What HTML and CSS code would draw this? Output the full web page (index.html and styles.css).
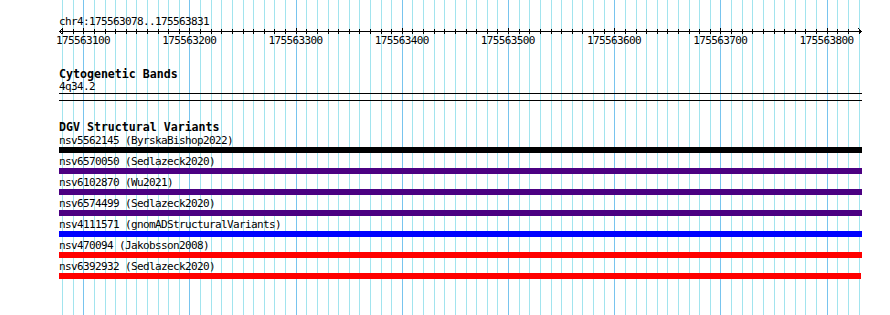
FILE: index.html
```html
<!DOCTYPE html>
<html lang="en">
  <head>
    <meta charset="UTF-8" />
    <title>chr4:175563078..175563831</title>
    <link rel="stylesheet" href="styles.css">
  </head>
  <body>
    <div class="panel">
      <svg class="grid" id="grid" width="890" height="315"></svg>

      <!-- ruler -->
      <div class="ruler">
        <div class="ruler-title">chr4:175563078..175563831</div>
        <svg class="scale" id="scale" width="805" height="6"></svg>
        <div class="scale-labels">
          <span>175563100</span>
          <span>175563200</span>
          <span>175563300</span>
          <span>175563400</span>
          <span>175563500</span>
          <span>175563600</span>
          <span>175563700</span>
          <span>175563800</span>
        </div>
      </div>

      <div class="track bands">
        <div class="track-title">Cytogenetic Bands</div>
        <div class="feature-label">4q34.2</div>
        <div class="band"></div>
      </div>

      <div class="track variants">
        <div class="track-title">DGV Structural Variants</div>
        <div class="feature-label">nsv5562145 (ByrskaBishop2022)</div>
        <div class="bar bar-black"></div>
        <div class="feature-label">nsv6570050 (Sedlazeck2020)</div>
        <div class="bar bar-indigo"></div>
        <div class="feature-label">nsv6102870 (Wu2021)</div>
        <div class="bar bar-indigo"></div>
        <div class="feature-label">nsv6574499 (Sedlazeck2020)</div>
        <div class="bar bar-indigo"></div>
        <div class="feature-label">nsv4111571 (gnomADStructuralVariants)</div>
        <div class="bar bar-blue"></div>
        <div class="feature-label">nsv470094 (Jakobsson2008)</div>
        <div class="bar bar-red"></div>
        <div class="feature-label">nsv6392932 (Sedlazeck2020)</div>
        <div class="bar bar-red bar-short"></div>
      </div>
    </div>

    <script>
      // grid lines + ruler ticks, one every 10 bp
      const start = 175563078;
      const stop = 175563831;
      const left = 59.9;
      const pxPerBp = 1.062;
      const ns = "http://www.w3.org/2000/svg";

      const grid = document.getElementById("grid");
      const scale = document.getElementById("scale");

      function xOf(bp) {
        return Math.round(left + (bp - start) * pxPerBp) + 0.5;
      }

      function line(svg, x1, y1, x2, y2, cls) {
        const l = document.createElementNS(ns, "line");
        l.setAttribute("x1", x1);
        l.setAttribute("y1", y1);
        l.setAttribute("x2", x2);
        l.setAttribute("y2", y2);
        l.setAttribute("class", cls);
        svg.appendChild(l);
      }

      for (let bp = 175563080; bp <= stop; bp += 10) {
        const x = xOf(bp);
        const major = bp % 100 === 0;
        line(grid, x, 0, x, 315, major ? "grid-major" : "grid-minor");
        const sx = x - 59;
        line(scale, sx, major ? 0 : 1, sx, major ? 6 : 5.5, "tick");
      }

      // axis with arrow heads at both ends
      line(scale, 0, 3.5, 803, 3.5, "tick");
      line(scale, 0.5, 3.5, 3.5, 0.5, "tick");
      line(scale, 0.5, 3.5, 3.5, 6.5, "tick");
      line(scale, 802.5, 3.5, 799.5, 0.5, "tick");
      line(scale, 802.5, 3.5, 799.5, 6.5, "tick");
    </script>
  </body>
</html>
```

FILE: styles.css
```css
body {
  margin: 0;
  background: #fff;
  color: #000;
  font-family: "DejaVu Sans Mono", "Liberation Mono", monospace;
  font-size: 11px;
  letter-spacing: -0.62px;
}

.panel {
  position: relative;
  z-index: 0;
  width: 890px;
  height: 315px;
  padding-top: 15px;
  box-sizing: border-box;
  overflow: hidden;
}

.grid {
  position: absolute;
  top: 0;
  left: 0;
  z-index: -1;
}

.grid line {
  stroke-width: 1;
  shape-rendering: crispEdges;
}

.grid-minor {
  stroke: #a2e4ee;
}

.grid-major {
  stroke: #78c4ee;
}

.ruler-title {
  padding-left: 59px;
  line-height: 13px;
  height: 13px;
}

.scale {
  display: block;
  margin-left: 59px;
}

.tick {
  stroke: #000;
  stroke-width: 1;
  shape-rendering: crispEdges;
}

.scale-labels {
  display: flex;
  margin-left: 30px;
  line-height: 13px;
  height: 13px;
}

.scale-labels span {
  flex: 0 0 106.2px;
  text-align: center;
}

.track-title {
  padding-left: 59px;
  font-weight: bold;
  font-size: 11.6px;
  letter-spacing: 0;
  line-height: 13px;
  height: 13px;
}

.bands {
  margin-top: 21px;
}

.bands .track-title {
  line-height: 12px;
  height: 12px;
}

.variants {
  margin-top: 20px;
}

.feature-label {
  padding-left: 59px;
  line-height: 13px;
  height: 13px;
  white-space: nowrap;
}

.band {
  margin-left: 59px;
  width: 803px;
  height: 6px;
  border-top: 1px solid #000;
  border-bottom: 1px solid #000;
}

.bar {
  margin-left: 59px;
  width: 803px;
  height: 6px;
  margin-bottom: 2px;
}

.bar-short {
  width: 802px;
}

.bar-black {
  background: #000;
}

.bar-indigo {
  background: #4b0082;
}

.bar-blue {
  background: #0000ff;
}

.bar-red {
  background: #ff0000;
}
```
